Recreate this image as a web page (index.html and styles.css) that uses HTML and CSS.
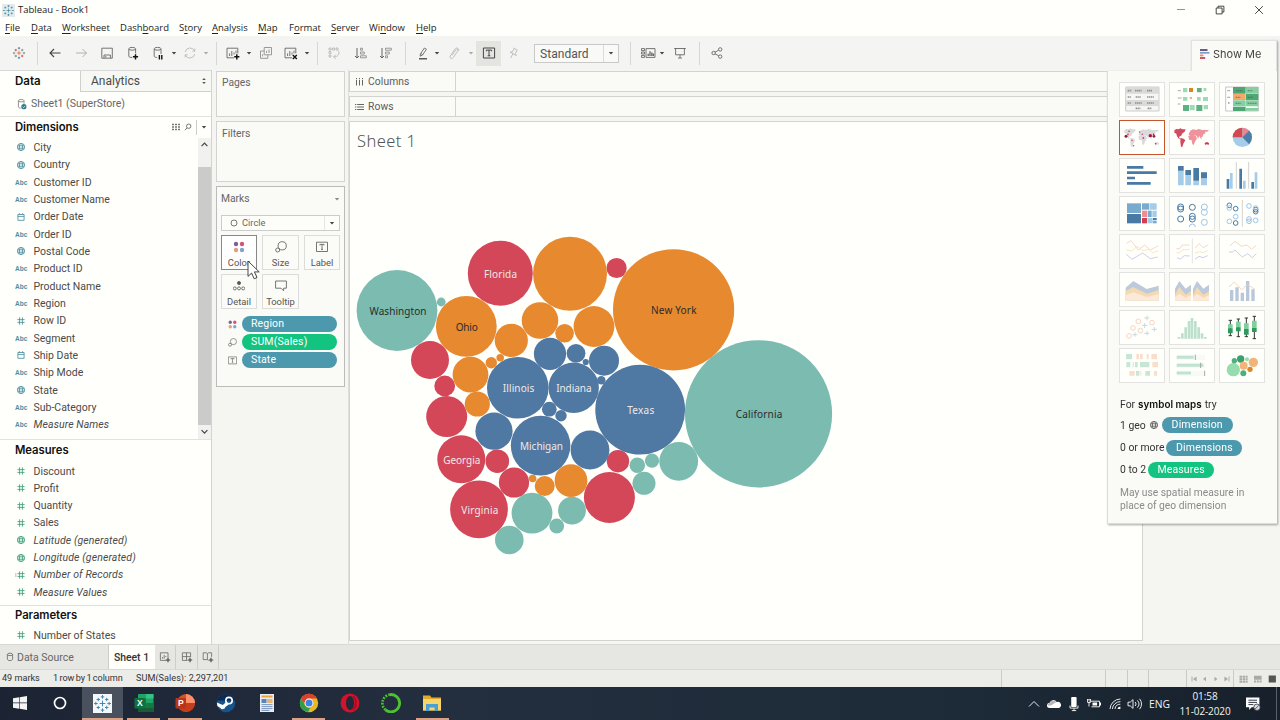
FILE: index.html
```html
<!DOCTYPE html>
<html lang="en">
<head>
<meta charset="utf-8">
<title>Tableau - Book1</title>
<link rel="stylesheet" href="styles.css">
</head>
<body>
<svg class="defs" aria-hidden="true">
  <symbol id="globe" viewBox="0 0 12 12"><circle cx="6" cy="6" r="3.6"/><ellipse cx="6" cy="6" rx="1.6" ry="3.6"/><path d="M2.6 4.8h6.8M2.6 7.2h6.8"/></symbol>
  <symbol id="hash" viewBox="0 0 12 12"><path d="M4.6 2.3v7.4M7.4 2.3v7.4M2.4 4.6h7.2M2.4 7.4h7.2"/></symbol>
  <symbol id="cal" viewBox="0 0 12 12"><path d="M2.9 3.5h6.2v5.8H2.9zM2.9 5.4h6.2M4.4 2.2v1.5M7.6 2.2v1.5"/></symbol>
  <symbol id="caret" viewBox="0 0 6 6"><path d="M.8 2h4.4L3 4.5z"/></symbol>
  <symbol id="dots" viewBox="0 0 12 12"><circle cx="3" cy="3" r="2.2" fill="#7b6291"/><circle cx="9" cy="3" r="2.2" fill="#d5527a"/><circle cx="3" cy="9" r="2.2" fill="#e99a7c"/><circle cx="9" cy="9" r="2.2" fill="#83a3cf"/></symbol>
  <symbol id="size" viewBox="0 0 12 12"><circle cx="7.2" cy="4.8" r="4.1"/><circle cx="2.7" cy="9" r="2"/></symbol>
  <symbol id="tbox" viewBox="0 0 12 12"><path d="M.5 1.2h11v9.3H.5zM3.9 4.4v-1h4.2v1M6 3.4v5M5 8.4h2"/></symbol>
</svg>

<header class="titlebar">
  <svg class="app-icon" viewBox="0 0 13 13"><rect width="13" height="13" fill="#e2eaec"/><path d="M6.5 4.5v4M4.5 6.5h4M6.5 1v2.2M5.4 2.1h2.2M6.5 9.8V12M5.4 10.9h2.2M1 6.5h2.2M9.8 6.5H12M3.3 2.6v2M2.3 3.6h2M9.7 2.6v2M8.7 3.6h2M3.3 8.4v2M2.3 9.4h2M9.7 8.4v2M8.7 9.4h2" stroke="#4e91a8" stroke-width=".8"/></svg>
  <span class="title">Tableau - Book1</span>
  <div class="winbtns">
    <svg viewBox="0 0 10 10"><path d="M1 4.5h8" stroke="#888"/></svg>
    <svg viewBox="0 0 10 10"><path d="M1.2 3h5.9v5.9H1.2zM3 3V1.2h5.9V7H7.1"/></svg>
    <svg viewBox="0 0 10 10"><path d="M1.2 1.2l7.6 7.6M8.8 1.2L1.2 8.8"/></svg>
  </div>
</header>

<nav class="menu">
  <span><u>F</u>ile</span><span><u>D</u>ata</span><span><u>W</u>orksheet</span><span>Dash<u>b</u>oard</span><span>S<u>t</u>ory</span><span><u>A</u>nalysis</span><span><u>M</u>ap</span><span>F<u>o</u>rmat</span><span><u>S</u>erver</span><span>Wi<u>n</u>dow</span><span><u>H</u>elp</span>
</nav>

<div class="toolbar">
  <i class="w37"><svg viewBox="0 0 16 16"><path d="M8 5.8v4.4M5.8 8h4.4" stroke="#e0783c"/><path d="M8 2v2.4M6.9 3.2h2.2M8 11.6V14M6.9 12.8h2.2" stroke="#5f7f9f"/><path d="M3 7v2.2M2 8h2.2M13 7v2.2M11.9 8H14" stroke="#7a8aa8"/><path d="M4.8 3.9v2.4M3.6 5.1H6" stroke="#c9554f"/><path d="M11.2 3.9v2.4M10 5.1h2.4" stroke="#5b9aa6"/><path d="M4.8 9.8v2.4M3.6 11H6" stroke="#5b9aa6"/><path d="M11.2 9.8v2.4M10 11h2.4" stroke="#c9554f"/></svg></i>
  <b class="sep sep-r4"></b>
  <i class="w26"><svg viewBox="0 0 16 16"><path d="M13.5 8H3M7 4L3 8l4 4" stroke="#444" stroke-width="1.1"/></svg></i>
  <i class="w26"><svg viewBox="0 0 16 16"><path d="M3 8h10.5M9.5 4l4 4-4 4" stroke="#aaa"/></svg></i>
  <i class="w26"><svg viewBox="0 0 16 16"><path d="M2.8 3.2h10.5v10H2.8zM5 13v-3h6.4v3M6.8 11v1.6"/></svg></i>
  <i class="w26"><svg viewBox="0 0 16 16"><path d="M3.8 4v7.2c0 .9 1.7 1.3 3.4 1.3M10.6 4v4.4"/><ellipse cx="7.2" cy="3.8" rx="3.4" ry="1.4"/><path d="M10.5 9.2v5.2M7.9 11.8h5.2" stroke="#111" stroke-width="1.5"/></svg></i>
  <i class="w24"><svg viewBox="0 0 16 16"><path d="M4.2 4v7.2c0 .9 1.7 1.3 3 1.3M11 4v5"/><ellipse cx="7.6" cy="3.8" rx="3.4" ry="1.4"/><path d="M9.4 10v4.4M11.8 10v4.4" stroke="#111" stroke-width="1.4"/></svg></i>
  <i class="w8"><svg class="caret"><use href="#caret"/></svg></i>
  <i class="w24"><svg viewBox="0 0 16 16" class="dim"><path d="M3.2 7a5 5 0 0 1 9.4-1.2M12.8 9a5 5 0 0 1-9.4 1.2M12.8 3.6v2.6h-2.4M3.2 12.4V9.8h2.4"/></svg></i>
  <i class="w8"><svg class="caret light"><use href="#caret"/></svg></i>
  <b class="sep sep-l6 sep-r4"></b>
  <i class="w24"><svg viewBox="0 0 16 16"><path d="M9 12.8H2V3.2h10.8v5.2M4.6 11V8.4M6.8 11V6M9 9.6V7.4M11 8.4V5.6"/><path d="M11.8 9.2v5.2M9.2 11.8h5.2" stroke="#111" stroke-width="1.5"/></svg></i>
  <i class="w8"><svg class="caret"><use href="#caret"/></svg></i>
  <i class="w26"><svg viewBox="0 0 16 16" class="mid"><path d="M6.2 2.5h7.3v7.3H6.2zM6.2 6H2.5v7.3h7.3V9.8M8.6 8V5.8M11 8V4.4M4.6 11.4V9.2"/></svg></i>
  <i class="w24"><svg viewBox="0 0 16 16"><path d="M9 12.8H2V3.2h10.8v5.2M4.6 11V8.4M6.8 11V6M9 9.6V7.4M11 8.4V5.6"/><path d="M9.8 10l4 4M13.8 10l-4 4" stroke="#111" stroke-width="1.4"/></svg></i>
  <i class="w8"><svg class="caret"><use href="#caret"/></svg></i>
  <b class="sep sep-l6 sep-r3"></b>
  <i class="w26"><svg viewBox="0 0 16 16" class="dim"><path d="M3 3h2v2H3zM6.5 3h2v2h-2zM10 3h2v2h-2zM3 6.5h2v2H3zM3 10h2v2H3zM12.5 5.8c1.6 3.2-.6 6-4.8 6M9.8 9.6l-2.2 2.2 2.2 2.2"/></svg></i>
  <i class="w28"><svg viewBox="0 0 16 16" class="mid"><path d="M4 3v10M2 11l2 2 2-2" stroke="#555"/><path d="M7.5 3.2h2v2h-2zM7.5 7h3.8v2H7.5zM7.5 10.8h5.8v2H7.5z"/></svg></i>
  <i class="w22"><svg viewBox="0 0 16 16" class="mid"><path d="M4 3v10M2 11l2 2 2-2" stroke="#555"/><path d="M7.5 3.2h5.8v2H7.5zM7.5 7h3.8v2H7.5zM7.5 10.8h2v2h-2z"/></svg></i>
  <b class="sep sep-l8 sep-r7"></b>
  <i class="w20"><svg viewBox="0 0 16 16"><path d="M4 13.8h8" stroke="#333" stroke-width="1.2"/><path d="M5 11.2l.6-2.6L9.4 3l2 1.2-3.8 5.8zM5.8 8.4l1.9 1.3"/></svg></i>
  <i class="w8"><svg class="caret"><use href="#caret"/></svg></i>
  <i class="w26"><svg viewBox="0 0 16 16" class="dim"><path d="M6.2 10.2l3.6-5.4c1-1.4 2.8-.3 2 1.1l-4.6 6.7c-1.4 2-4.2.4-2.9-1.6l4.9-7.2c1.4-1.8 4.4-.2 3.4 2"/></svg></i>
  <i class="w8"><svg class="caret light"><use href="#caret"/></svg></i>
  <i class="w25 pressed"><svg viewBox="0 0 16 16"><path d="M2.4 3h11.2v10H2.4z" stroke="#333"/><path d="M5.4 6.2V5.1h5.2v1.1M8 5.1v5.6M6.7 10.8h2.6" stroke="#333"/></svg></i>
  <i class="w24"><svg viewBox="0 0 16 16" class="dim"><path d="M8.6 3l3.8 2.2M9.2 3.4L7.4 7M12 5.2l-1.6 3.4M5 7l6.4 3.6M5 7l2.4 0M11.4 10.6l-1-2M7.8 9l-2.2 4"/></svg></i>
  <div class="fit"><span>Standard</span><em><svg class="caret big"><use href="#caret"/></svg></em></div>
  <b class="sep sep-l11 sep-r7"></b>
  <i class="w20"><svg viewBox="0 0 16 16"><path d="M1.5 3.6h3v2h-3zM1.5 7h3v2h-3zM1.5 10.4h3v2h-3zM6 3.6h9v8.8H6z"/><path d="M8.2 11V8.8M10 11V6.2M11.8 11V7.4M13.4 11V8.6" stroke-width="1.3"/></svg></i>
  <i class="w8"><svg class="caret"><use href="#caret"/></svg></i>
  <i class="w28"><svg viewBox="0 0 16 16"><path d="M2.2 3.5h11.6M3.6 3.5V9.8h8.8V3.5M8 9.8v3M6 13h4"/></svg></i>
  <b class="sep sep-l5 sep-r5"></b>
  <i class="w24"><svg viewBox="0 0 16 16"><circle cx="4.6" cy="8" r="1.7"/><circle cx="11.2" cy="4.4" r="1.7"/><circle cx="11.2" cy="11.6" r="1.7"/><path d="M6 7.2l3.7-2M6 8.8l3.7 2"/></svg></i>
</div>

<main class="workspace">
  <aside class="data-pane">
    <div class="pane-tabs"><span class="on">Data</span><span class="off">Analytics<svg viewBox="0 0 6 8"><path d="M1.2 3L3 1l1.8 2zM1.2 5L3 7l1.8-2z"/></svg></span></div>
    <div class="source"><svg viewBox="0 0 12 12"><path d="M2.4 2.8v6c0 .7 1 1.2 2.4 1.3M8 2.8v3"/><ellipse cx="5.2" cy="2.7" rx="2.8" ry="1.2"/><circle cx="7.9" cy="8.7" r="2.6" fill="#2c7f8f" stroke="none"/><path d="M6.7 8.7l.9.9 1.5-1.7" stroke="#fff" stroke-width=".7"/></svg><span>Sheet1 (SuperStore)</span></div>
    <section class="dims">
      <div class="head"><h2>Dimensions</h2><svg class="grid-ic" viewBox="0 0 10 8"><path d="M1 1.5h2M4 1.5h2M7 1.5h2M1 4h2M4 4h2M7 4h2M1 6.5h2M4 6.5h2M7 6.5h2"/></svg><svg class="find-ic" viewBox="0 0 8 8"><circle cx="4.7" cy="3.2" r="2.2"/><path d="M3 4.9L1 7.2"/></svg><em><svg class="caret big"><use href="#caret"/></svg></em></div>
      <div class="scroller">
        <ul class="fields dim-list">
          <li><svg><use href="#globe"/></svg>City</li>
          <li><svg><use href="#globe"/></svg>Country</li>
          <li><abbr>Abc</abbr>Customer ID</li>
          <li><abbr>Abc</abbr>Customer Name</li>
          <li><svg><use href="#cal"/></svg>Order Date</li>
          <li><abbr>Abc</abbr>Order ID</li>
          <li><svg><use href="#globe"/></svg>Postal Code</li>
          <li><abbr>Abc</abbr>Product ID</li>
          <li><abbr>Abc</abbr>Product Name</li>
          <li><abbr>Abc</abbr>Region</li>
          <li><svg><use href="#hash"/></svg>Row ID</li>
          <li><abbr>Abc</abbr>Segment</li>
          <li><svg><use href="#cal"/></svg>Ship Date</li>
          <li><abbr>Abc</abbr>Ship Mode</li>
          <li><svg><use href="#globe"/></svg>State</li>
          <li><abbr>Abc</abbr>Sub-Category</li>
          <li class="gen"><abbr>Abc</abbr>Measure Names</li>
        </ul>
        <div class="scrollbar"><svg viewBox="0 0 13 29"><path d="M3.6 8.2l2.9-3 2.9 3"/></svg><div class="thumb"></div><svg class="down" viewBox="0 0 13 14"><path d="M3.6 5.2l2.9 3 2.9-3"/></svg></div>
      </div>
    </section>
    <section class="meas">
      <h2>Measures</h2>
      <ul class="fields green">
        <li><svg><use href="#hash"/></svg>Discount</li>
        <li><svg><use href="#hash"/></svg>Profit</li>
        <li><svg><use href="#hash"/></svg>Quantity</li>
        <li><svg><use href="#hash"/></svg>Sales</li>
        <li class="gen"><svg><use href="#globe"/></svg>Latitude (generated)</li>
        <li class="gen"><svg><use href="#globe"/></svg>Longitude (generated)</li>
        <li class="gen"><svg viewBox="0 0 12 12"><path d="M4.6 2.3v7.4M7.4 2.3v7.4M2.4 4.6h7.2M2.4 7.4h7.2M.2 5h1.2M.2 7h1.2"/></svg>Number of Records</li>
        <li class="gen"><svg><use href="#hash"/></svg>Measure Values</li>
      </ul>
    </section>
    <section class="params">
      <h2>Parameters</h2>
      <ul class="fields green"><li><svg><use href="#hash"/></svg>Number of States</li></ul>
    </section>
  </aside>

  <div class="cards">
    <div class="card pages">Pages</div>
    <div class="card filters">Filters</div>
    <div class="card marks">
      <div class="marks-head"><span>Marks</span><svg class="caret mid-caret"><use href="#caret"/></svg></div>
      <div class="mark-type"><svg viewBox="0 0 8 8"><circle cx="4" cy="4" r="3"/></svg><span>Circle</span><em><svg class="caret big"><use href="#caret"/></svg></em></div>
      <div class="mark-btns">
        <div class="mb active"><svg><use href="#dots"/></svg>Color</div>
        <div class="mb"><svg><use href="#size"/></svg>Size</div>
        <div class="mb"><svg><use href="#tbox"/></svg>Label</div>
        <div class="mb"><svg viewBox="0 0 12 12"><circle cx="6" cy="3" r="1.6" fill="#555"/><circle cx="1.8" cy="8.4" r="1.5"/><circle cx="6" cy="8.4" r="1.5"/><circle cx="10.2" cy="8.4" r="1.5"/></svg>Detail</div>
        <div class="mb"><svg viewBox="0 0 12 12"><path d="M.6 1h10.8v7.2H8.6v2.6L6 8.2H.6z"/></svg>Tooltip</div>
      </div>
      <div class="pills">
        <svg><use href="#dots"/></svg><span class="pill">Region</span>
        <svg><use href="#size"/></svg><span class="pill grn">SUM(Sales)</span>
        <svg><use href="#tbox"/></svg><span class="pill">State</span>
      </div>
      <svg class="cursor" viewBox="0 0 13 20"><path d="M1 1v15.4l3.6-3.4 2.6 5.8 2.8-1.3-2.6-5.6h4.8z" fill="#fff" stroke="#333" stroke-width=".9"/></svg>
    </div>
  </div>

  <div class="sheet-area">
    <div class="shelf"><span><svg viewBox="0 0 9 8"><path d="M1.5 0v1.2M4.5 0v1.2M7.5 0v1.2M1.5 2v5.5M4.5 2v5.5M7.5 2v5.5"/></svg>Columns</span></div>
    <div class="shelf rows"><span><svg viewBox="0 0 9 8"><path d="M0 1.5h1.3M0 4h1.3M0 6.5h1.3M2.2 1.5H9M2.2 4H9M2.2 6.5H9"/></svg>Rows</span></div>
    <div class="sheet">
      <svg class="viz" viewBox="350 122 792 518">
        <text class="sheet-title" x="357" y="147" textLength="59">Sheet 1</text>
        <g fill="#7bbbb0">
          <circle cx="397" cy="310.5" r="40.4"/><circle cx="441.2" cy="302" r="4.4"/><circle cx="758.5" cy="413.8" r="73.6"/><circle cx="532" cy="513.2" r="20.4"/><circle cx="509.3" cy="540" r="14.3"/><circle cx="556.7" cy="526" r="7.4"/><circle cx="572" cy="510.6" r="13.9"/><circle cx="637.3" cy="465.2" r="7.8"/><circle cx="652" cy="460.7" r="7.1"/><circle cx="678.7" cy="461.3" r="19.4"/><circle cx="644" cy="483.3" r="11.5"/>
        </g>
        <g fill="#d34759">
          <circle cx="500.3" cy="273.2" r="32.5"/><circle cx="616.6" cy="268" r="10.1"/><circle cx="430" cy="360" r="19"/><circle cx="444.7" cy="386" r="10.4"/><circle cx="446.7" cy="416.5" r="20.5"/><circle cx="461.3" cy="459.3" r="24"/><circle cx="497.3" cy="461.2" r="11.8"/><circle cx="514" cy="482.5" r="15.1"/><circle cx="618" cy="461.2" r="11.2"/><circle cx="609.4" cy="497.5" r="25.5"/><circle cx="479" cy="509.3" r="28.9"/>
        </g>
        <g fill="#e7892f">
          <circle cx="570" cy="273.8" r="37"/><circle cx="673.6" cy="309.8" r="60.6"/><circle cx="466.3" cy="326.3" r="30.4"/><circle cx="511.3" cy="340.4" r="16.6"/><circle cx="540" cy="320.5" r="18.3"/><circle cx="564.6" cy="333.3" r="9.3"/><circle cx="594" cy="326.5" r="20.4"/><circle cx="470.5" cy="374.6" r="17.9"/><circle cx="491.3" cy="362.8" r="5.7"/><circle cx="500.2" cy="357.7" r="3.8"/><circle cx="477.3" cy="404" r="12.6"/><circle cx="532.6" cy="478.5" r="3.8"/><circle cx="544.7" cy="486" r="10"/><circle cx="571" cy="480.7" r="16.4"/>
        </g>
        <g fill="#4f78a2">
          <circle cx="640.2" cy="409.7" r="44.9"/><circle cx="517.8" cy="387.7" r="30.8"/><circle cx="573.7" cy="387.7" r="25.2"/><circle cx="550" cy="353.9" r="16.1"/><circle cx="576" cy="353.3" r="9.4"/><circle cx="585.8" cy="362" r="3.1"/><circle cx="604" cy="360.7" r="15"/><circle cx="601.3" cy="380.2" r="4.2"/><circle cx="494" cy="431.2" r="18.6"/><circle cx="549.3" cy="409.2" r="7.4"/><circle cx="561" cy="415.7" r="5.7"/><circle cx="540.6" cy="445.6" r="29.8"/><circle cx="590" cy="450" r="19.4"/>
        </g>
        <g class="lbl-dark"><text x="369.5" y="315" textLength="57">Washington</text><text x="455.7" y="330.5" textLength="22">Ohio</text><text x="651" y="314.2" textLength="45.5">New York</text><text x="735.8" y="418.2" textLength="46.5">California</text></g>
        <g class="lbl-light"><text x="484" y="277.7" textLength="33">Florida</text><text x="502.8" y="392.3" textLength="31.5">Illinois</text><text x="556.2" y="392.3" textLength="35.3">Indiana</text><text x="627.2" y="414.3" textLength="27">Texas</text><text x="520" y="450" textLength="43">Michigan</text><text x="443.3" y="464" textLength="37">Georgia</text><text x="461.3" y="514" textLength="37">Virginia</text></g>
      </svg>
    </div>
  </div>
</main>

<footer class="sheet-tabs">
  <span class="ds"><svg viewBox="0 0 8 10"><ellipse cx="4" cy="2.4" rx="2.6" ry="1.2"/><path d="M1.4 2.4v5c0 1.6 5.2 1.6 5.2 0v-5"/></svg>Data Source</span>
  <span class="cur">Sheet 1</span>
  <span class="new"><svg viewBox="0 0 12 12"><path d="M7.5 9.4H1.4V1.8H9v5M3.6 7.6V6M5.2 7.6V4M6.8 6V5"/><path d="M9 6.8v4.4M6.8 9H11.2" class="plus"/></svg></span>
  <span class="new"><svg viewBox="0 0 12 12"><path d="M6.5 9.4H1.4V1.8H9.6v4M5.5 1.8v7.6M1.4 5.6h8.2"/><path d="M9 6.8v4.4M6.8 9H11.2" class="plus"/></svg></span>
  <span class="new"><svg viewBox="0 0 12 12"><path d="M6.5 9.4L5.4 8.6H1.2V1.8h3.2l1 .8 1-.8h3.2v4M5.4 2.6v6"/><path d="M9 6.8v4.4M6.8 9H11.2" class="plus"/></svg></span>
</footer>

<div class="status">
  <span class="s1">49 marks</span><span class="s2">1 row by 1 column</span><span class="s3">SUM(Sales): 2,297,201</span>
  <div class="cells"><b class="c104"></b><b class="c22"></b><b class="c21"></b><b class="c38"></b>
    <b class="c47"><svg viewBox="0 0 46 8"><path d="M6 4l3.6-2.4v4.8zM16 4l3-2.2v4.4zM30.4 4l-3-2.2v4.4zM41 4l-3.6-2.4v4.8z"/><path d="M5 1.5v5M42 1.5v5" class="ln"/></svg></b>
    <b class="c47"><svg viewBox="0 0 46 8"><path d="M5.5.7H8v2H5.5zM8.6.7H11v2H8.6zM11.6.7h2v2h-2zM5.5 3.2H8v2H5.5zM8.6 3.2H11v2H8.6zM11.6 3.2h2v2h-2zM5.5 5.7H8v2H5.5zM8.6 5.7H11v2H8.6zM11.6 5.7h2v2h-2zM20 .7h7.6v4H20zM20 5.5h2v2h-2zM22.8 5.5h2v2h-2zM25.6 5.5h2v2h-2z"/><path d="M34.7.5h7.2v7h-7.2z" class="dk"/></svg></b>
  </div>
</div>

<div class="taskbar">
  <i class="tb40"><svg viewBox="0 0 16 16"><path d="M1 3.2L7.2 2.3v5.3H1zM7.8 2.2L15 1.1v6.5H7.8zM1 8.3h6.2v5.4L1 12.8zM7.8 8.3H15v6.6l-7.2-1.1z" fill="#f4f4f4"/></svg></i>
  <i class="tb42"><svg viewBox="0 0 16 16"><circle cx="8" cy="8" r="5.5" fill="none" stroke="#fff" stroke-width="1.7"/></svg></i>
  <i class="open sel"><svg class="i19" viewBox="0 0 18 18"><rect width="18" height="18" fill="#f5f8fa"/><path d="M9 6.3v5.4M6.3 9h5.4M9 1v3.4M7.4 2.7h3.2M9 13.6V17M7.4 15.3h3.2M1 9h3.4M2.7 7.4v3.2M13.6 9H17M15.3 7.4v3.2M5 3.6v3.2M3.4 5.2h3.2M13 3.6v3.2M11.4 5.2h3.2M5 11.2v3.2M3.4 12.8h3.2M13 11.2v3.2M11.4 12.8h3.2" stroke="#3f82a8" stroke-width=".9"/></svg></i>
  <i class="open"><svg class="i20" viewBox="0 0 20 20"><rect x="4" y="1" width="15.5" height="18" rx="1" fill="#21a366"/><path d="M12 1h7.5v4.5H12z" fill="#33c481"/><path d="M4 5.5h8V10H4z" fill="#107c41"/><path d="M4 10h15.5v4.5H4z" fill="#107c41"/><path d="M4 14.5h15.5V19H4z" fill="#185c37"/><rect x=".5" y="5" width="10.5" height="10.5" rx="1" fill="#0f7040"/><text x="2.9" y="13.2">X</text></svg></i>
  <i class="open"><svg class="i20" viewBox="0 0 20 20"><circle cx="11" cy="10" r="9" fill="#d35230"/><path d="M11 1a9 9 0 0 1 9 9h-9z" fill="#ff8f6b"/><path d="M2 10h18a9 9 0 0 1-18 0z" fill="#c43e1c"/><rect x=".5" y="5" width="10.5" height="10.5" rx="1" fill="#b7361a"/><text x="3" y="13.2">P</text></svg></i>
  <i><svg class="i20" viewBox="0 0 20 20"><circle cx="10" cy="10" r="9.2" fill="#15558c"/><path d="M1.2 7.5a9.2 9.2 0 0 1 17.6 0z" fill="#10294f"/><circle cx="13" cy="7.6" r="3.2" fill="none" stroke="#fff" stroke-width="1.6"/><path d="M.8 9.4l6 2.6 3.4-3 2.6 2.6-3.4 2.4a2.8 2.8 0 0 1-5 1L1.4 13z" fill="#fff"/></svg></i>
  <i><svg class="i20" viewBox="0 0 20 20"><path d="M3 1h14v18H3z" fill="#e9edf2"/><path d="M4.5 2.5h11v2h-11z" fill="#e8a33c"/><path d="M4.5 6h5v4h-5z" fill="#5a83b9"/><path d="M10 6h5.5v4H10z" fill="#e8b56c"/><path d="M4.5 11.6h11M4.5 13.6h11M4.5 15.6h11M4.5 17.4h8" stroke="#7c97c0" stroke-width="1"/></svg></i>
  <i class="open"><svg class="i20" viewBox="0 0 20 20"><circle cx="10" cy="10" r="9.2" fill="#e8b922"/><path d="M2 5.4A9.2 9.2 0 0 1 18 5.6H10a4.4 4.4 0 0 0-4 6.2z" fill="#d8412f"/><path d="M2 5.4l4.2 7a4.4 4.4 0 0 0 5.2 2L9 19.1A9.2 9.2 0 0 1 2 5.4z" fill="#2e9e4c"/><circle cx="10" cy="10" r="4.4" fill="#fff"/><circle cx="10" cy="10" r="3.5" fill="#4081e8"/></svg></i>
  <i><svg class="i20" viewBox="0 0 20 20"><ellipse cx="10" cy="10" rx="9.4" ry="9.4" fill="#d3122b"/><ellipse cx="10" cy="10" rx="4" ry="7" fill="#1f2a3a"/><path d="M12.5 3.5c4.5 2 4.5 11 0 13" fill="none" stroke="#a70e22" stroke-width="2"/></svg></i>
  <i><svg class="i20" viewBox="0 0 20 20"><path d="M8 1.8a8.6 8.6 0 1 1-3.5 15" fill="none" stroke="#4cc233" stroke-width="2.8"/><path d="M4.5 16.8A8.6 8.6 0 0 1 8 1.8" fill="none" stroke="#4cc233" stroke-width="2.6" stroke-dasharray="1.8 1.2"/></svg></i>
  <i class="open"><svg class="i20" viewBox="0 0 20 20"><path d="M1 2.5h7l1.5 2H19v13H1z" fill="#e3a92c"/><path d="M1 6h18v11.5H1z" fill="#f7d56c"/><path d="M4 18v-7h12v7h-3.4v-3.6H7.4V18z" fill="#4a9fd4"/></svg></i>
  <div class="tray">
    <svg viewBox="0 0 16 16"><path d="M3 10.5l5-5 5 5" class="wl"/></svg>
    <svg viewBox="0 0 16 16"><path d="M3.5 12a2.6 2.6 0 0 1 .2-5.2A3.8 3.8 0 0 1 10.6 6a3 3 0 0 1 2.3 6z" fill="#fff"/><path d="M1.8 9.6a2.6 2.6 0 0 1 2-2.8A3.8 3.8 0 0 1 10.4 6L5 9.6z" fill="#b6b6bd"/></svg>
    <svg viewBox="0 0 16 16"><rect x="5.2" y="1" width="5.4" height="10" rx=".8" fill="#fff"/><path d="M4 9.5v2.6h8V9.5M8 12v2.6M5.8 14.6h4.4" class="wl"/></svg>
    <svg viewBox="0 0 16 16"><path d="M3.5 5.2h10v5.6h-8" class="wl"/><path d="M6.5 6.4h4.6v3.2H6.5zM13.8 6.6H15v2.8h-1.2z" fill="#fff"/><path d="M1 3.8h4M1.6 3v3.5h2.8V3M3 6.5v4" class="wl"/></svg>
    <svg viewBox="0 0 16 16"><path d="M3 13A10.5 10.5 0 0 1 13.4 3M5.4 13a8 8 0 0 1 8-7.4M8 13a5.4 5.4 0 0 1 5.4-4.8" class="wl"/><path d="M10.4 13a3 3 0 0 1 3-2.6V13z" fill="#fff"/></svg>
    <svg viewBox="0 0 16 16"><path d="M1 6.2h2.2L6 3.6v8.8L3.2 9.8H1zM8.2 6a3 3 0 0 1 0 4M10.4 4.4a5.4 5.4 0 0 1 0 7.2M12.6 2.8a8 8 0 0 1 0 10.4" class="wl"/></svg>
    <span class="lang">ENG</span>
    <div class="clock"><span>01:58</span><span>11-02-2020</span></div>
    <svg class="note" viewBox="0 0 16 16"><path d="M1 1.5h13.4v9.8H6.6L4.2 14v-2.7H1z" fill="#fff"/><path d="M3.4 4.2H12M3.4 6.4H12M3.4 8.6h5" stroke="#1b2430" stroke-width=".9"/><circle cx="12" cy="11.2" r="3.2" fill="#ddd" stroke="#1b2430" stroke-width=".7"/><path d="M10 13.2l4-4" stroke="#1b2430" stroke-width=".7"/></svg>
  </div>
</div>

<aside class="showme">
  <div class="sm-tab"><svg viewBox="0 0 10 10"><path d="M0 1h7.5" stroke="#5b4a78"/><path d="M0 3.8h9.5" stroke="#7f9fd0"/><path d="M0 6.4h3.4" stroke="#e8906a"/><path d="M0 9h5.2" stroke="#cf3f5f"/></svg>Show Me</div>
  <div class="sm-body">
    <div class="thumbs">
      <svg viewBox="0 0 138 105"><path d="M20 15h100v72H20z" fill="#f6f6f4" stroke="#ccc" stroke-width="3"/><path d="M20 15h100v20H20zM20 54h100v18H20z" fill="#dadad8"/><path d="M26 26h12M48 26h20M84 26h16M26 45h10M50 45h16M84 45h22M26 63h10M48 63h22M84 63h22M50 79h14M86 79h12" stroke="#8f8f8f" stroke-width="5" stroke-dasharray="4 1.5"/></svg>
      <svg viewBox="0 0 138 105"><path d="M26 26h10M26 48h12M26 66h8" stroke="#aaa" stroke-width="3"/><path d="M84 18h14v13H84zM42 69h18v18H42zM82 69h18v18H82z" fill="#5fb184"/><path d="M42 18h13v13H42zM104 18h8v9h-8zM42 45h13v11H42zM84 45h11v11H84zM102 45h15v12h-15zM62 69h15v16H62zM104 69h13v13h-13z" fill="#9edab4"/><path d="M60 18h12v12H60z" fill="#d98526"/><path d="M62 45h7v6h-7z" fill="#f2b27a"/></svg>
      <svg viewBox="0 0 138 105"><path d="M20 15h98v72H20z" fill="#fff" stroke="#aaa" stroke-width="2"/><path d="M42 15h38v20H42zM80 36h38v18H80zM42 74h38v13H42z" fill="#4fa574"/><path d="M81 15h37v20H81zM42 55h38v18H42zM81 55h37v18H81zM81 78h37v8H81z" fill="#84cf9f"/><path d="M42 36h37v18H42z" fill="#f3a968"/><path d="M25 26h8M25 46h8M27 63h6M52 26h18M86 26h14M50 46h14M86 46h16M50 64h16M86 64h28" stroke="#46604f" stroke-opacity=".6" stroke-width="4" stroke-dasharray="4 1.5"/></svg>

      <svg class="picked" viewBox="0 0 138 105"><path d="M16 31l6-4 8 1 3-3 8 3 9 0-3 7-8 6-2 6-5 2-2 5 4 3-4 0-6-8-2-8-6-3zM34 54l10 2 5 5-6 10-3 10-4-1-2-14zM58 48l8-3 14 2 4 8-6 10-4 10-4-2-2-12-8-2zM60 40l4-8 8-4 10 2 6-3 12 3 20 0-6 6-4-2-1 6-6 3-2 7-4 1 1 8-4-5-3-6-4 8-3-7-5-3-6 1-8-1-6-1zM107 69l7-3 6 3-1 6-5-2-6 1z" fill="#dadadc"/><g fill="#a31545"><circle cx="21" cy="49" r="4.5"/><circle cx="94" cy="47" r="5"/><circle cx="105" cy="49" r="4"/><circle cx="104" cy="43" r="2.5"/><circle cx="73" cy="54" r="2.5"/></g><g fill="#d0406e"><circle cx="30" cy="34" r="2.5"/><circle cx="27" cy="43" r="2.5"/><circle cx="39" cy="61" r="2.2"/><circle cx="44" cy="77" r="2.2"/><circle cx="62" cy="36" r="2.5"/><circle cx="70" cy="43" r="2.2"/><circle cx="110" cy="71" r="2.5"/></g></svg>
      <svg viewBox="0 0 138 105"><path d="M16 31l6-4 8 1 3-3 8 3 9 0-3 7-8 6-2 6-5 2-2 5 4 3-4 0-6-8-2-8-6-3zM34 54l10 2 5 5-6 10-3 10-4-1-2-14z" fill="#d24b5e"/><path d="M58 48l8-3 14 2 4 8-6 10-4 10-4-2-2-12-8-2zM60 40l4-8 8-4 10 2 6-3 12 3 20 0-6 6-4-2-1 6-6 3-2 7-4 1 1 8-4-5-3-6-4 8-3-7-5-3-6 1-8-1-6-1z" fill="#f0929b"/><path d="M107 69l7-3 6 3-1 6-5-2-6 1z" fill="#c63a54"/></svg>
      <svg viewBox="0 0 138 105"><circle cx="70" cy="52" r="29" fill="#a5cdea"/><path d="M70 52V23a29 29 0 0 0-29 29z" fill="#d4494f"/><path d="M70 52V23a29 29 0 0 1 20.5 8.5z" fill="#ee8490"/><path d="M70 52l20.5-20.5a29 29 0 0 1 0 41z" fill="#4c7fa8"/></svg>

      <svg viewBox="0 0 138 105"><path d="M24 28h49M24 44h89M24 60h24M24 76h71" stroke="#487aa3" stroke-width="8"/></svg>
      <svg viewBox="0 0 138 105"><path d="M27 38h17v44H27zM49 51h17v31H49zM73 68h17v14H73zM96 61h18v21H96z" fill="#a5cdea"/><path d="M27 24h17v14H27zM49 36h17v15H49zM73 30h17v38H73zM96 43h18v18H96z" fill="#487aa3"/></svg>
      <svg viewBox="0 0 138 105"><path d="M52 12v80M89 12v80" stroke="#bbb" stroke-width="2"/><path d="M27 92V63M65 92V32M101 92V72" stroke="#487aa3" stroke-width="8"/><path d="M37 92V45M76 92V68M111 92V43" stroke="#a5cdea" stroke-width="8"/></svg>

      <svg viewBox="0 0 138 105"><path d="M24 22h42v29H24z" fill="#7baacf"/><path d="M24 54h42v28H24z" fill="#487aa3"/><path d="M69 22h22v19H69z" fill="#7baacf"/><path d="M93 22h20v19H93zM100 44h13v19h-13zM86 66h15v16H86z" fill="#a5cdea"/><path d="M69 44h15v19H69z" fill="#ee8e92"/><path d="M69 66h15v16H69z" fill="#cf3f4e"/><path d="M86 44h12v19H86z" fill="#7baacf"/><path d="M102 66h11v6h-11z" fill="#487aa3"/><path d="M102 74h11v8h-11z" fill="#7baacf"/></svg>
      <svg viewBox="0 0 138 105" class="rings"><g stroke="#487aa3"><circle cx="35" cy="33" r="9"/><circle cx="35" cy="39" r="9"/><circle cx="35" cy="69" r="9"/><circle cx="70" cy="34" r="9"/><circle cx="70" cy="61" r="9"/><circle cx="70" cy="69" r="9"/></g><g stroke="#9cc6e6"><circle cx="106" cy="33" r="9"/><circle cx="106" cy="49" r="9"/><circle cx="106" cy="79" r="9"/><path d="M61 93a9 9 0 0 1 18 0"/></g></svg>
      <svg viewBox="0 0 138 105" class="rings"><path d="M70 12v80" stroke="#bbb" stroke-width="2"/><g stroke="#487aa3"><circle cx="31" cy="28" r="7"/><circle cx="50" cy="38" r="7"/><circle cx="50" cy="81" r="7"/><circle cx="110" cy="41" r="7"/><circle cx="110" cy="47" r="7"/></g><g stroke="#9cc6e6"><circle cx="31" cy="36" r="7"/><circle cx="50" cy="62" r="7"/><circle cx="31" cy="76" r="7"/><circle cx="90" cy="30" r="7"/><circle cx="110" cy="36" r="7"/><circle cx="90" cy="69" r="7"/><circle cx="90" cy="76" r="7"/><circle cx="110" cy="73" r="7"/></g></svg>

      <svg viewBox="0 0 138 105" class="lines"><path d="M22 28l14-8 22 28 19-15 17 15 24-13" stroke="#f3cfc0"/><path d="M22 47l16 4 16-14 18 13 18-4 10 10 18-5" stroke="#f8e0bd"/><path d="M22 61l17 15 32-19 23 17 22-5" stroke="#bfc7e2"/></svg>
      <svg viewBox="0 0 138 105" class="lines"><path d="M70 14v74" stroke="#ddd"/><path d="M22 44h10l8-11h22" stroke="#f3cfc0"/><path d="M22 56h10l10-10 8 2 12-3M78 57l14-4 10 3 14-6" stroke="#f8e0bd"/><path d="M78 43l12-14 12 12 16-9" stroke="#f3cfc0"/><path d="M24 71l10 4 12-10 16 1M78 76l12-9 12 4 14-6" stroke="#bfc7e2"/></svg>
      <svg viewBox="0 0 138 105" class="lines"><path d="M22 18v70M118 18v70" stroke="#eee" stroke-width="2" stroke-dasharray="2 10"/><path d="M32 36l16-14 20 15 16-4 14 13 12-12" stroke="#f3cfc0"/><path d="M30 54h10l8-6 22 21 16-10 14 12 12-12" stroke="#bfc7e2"/></svg>

      <svg viewBox="0 0 138 105"><path d="M20 47l23-20 40 24 36-10v45H20z" fill="#bccadb"/><path d="M20 58l22-13 42 20 35-11v32H20z" fill="#f5d9b0"/><path d="M20 70l24-9 40 14 35-9v20H20z" fill="#fbe9da"/></svg>
      <svg viewBox="0 0 138 105"><path d="M18 50l13-23 19 23 16-12v48H18zM72 50l12-23 19 23 17-12v48H72z" fill="#bccadb"/><path d="M18 68l13-23 19 23 16-10v28H18zM72 68l12-23 19 23 17-10v28H72z" fill="#f5d9b0"/><path d="M18 76l13-11 19 12 16-8v17H18zM72 76l12-11 19 12 17-8v17H72z" fill="#fbe9da"/></svg>
      <svg viewBox="0 0 138 105"><path d="M38 87V54M54 87V46M70 87V62M86 87V27M102 87V52" stroke="#b9c7db" stroke-width="10"/><path d="M30 45l16-15 22 23 18-15 22 14" stroke="#f3cfb0" stroke-width="2.5" fill="none"/></svg>

      <svg viewBox="0 0 138 105"><g fill="none" stroke="#f5d5c0" stroke-width="3"><circle cx="58" cy="34" r="7"/><circle cx="42" cy="54" r="7"/><circle cx="64" cy="62" r="7"/><circle cx="99" cy="38" r="7"/><circle cx="30" cy="78" r="7"/></g><path d="M84 17v14M76 24h15M77 39v15M69 46h16M48 67v13M40 74h15M84 63v13M76 70h15M106 51v14M98 58h16" stroke="#c9d9dc" stroke-width="3"/></svg>
      <svg viewBox="0 0 138 105"><path d="M30 86v-5M40 86V70M50 86V52M60 86V33M69 86V24M79 86V33M89 86V52M99 86V70M109 86v-5" stroke="#bde0cd" stroke-width="8"/></svg>
      <svg viewBox="0 0 138 105"><path d="M34 31v46M58 27v53M82 24v56M106 19v67" stroke="#333" stroke-width="3"/><path d="M29 31h10M29 77h10M53 27h10M53 80h10M77 24h10M77 80h10M101 19h10M101 86h10" stroke="#333" stroke-width="3"/><path d="M27 43h14v12H27zM51 35h14v17H51zM75 40h14v17H75zM99 32h14v22H99z" fill="#7fd09c"/><path d="M27 55h14v15H27zM51 52h14v12H51zM75 57h14v17H75zM99 54h14v12H99z" fill="#2d9a5c"/></svg>

      <svg viewBox="0 0 138 105"><path d="M21 18h18v16H21zM22 42h12v16H22zM41 42h3v16h-3zM48 42h8v16h-8zM63 42h28v16H63zM51 69h10v14H51zM79 69h14v14H79z" fill="#c8e6d6"/><path d="M52 18h8v16h-8zM63 18h8v16h-8zM83 18h6v16h-6zM97 18h17v16H97zM100 42h17v16h-17zM31 69h16v14H31zM64 69h3v14h-3zM105 69h9v14h-9z" fill="#f9dfcb"/></svg>
      <svg viewBox="0 0 138 105"><path d="M23 20h85v16H23zM23 44h85v16H23zM23 68h85v16H23z" fill="#f7faf6"/><path d="M23 28h51M23 52h80M23 75h43" stroke="#bfe3d0" stroke-width="9"/><path d="M79 20v16M95 44v16M107 68v16" stroke="#999" stroke-width="2.5"/></svg>
      <svg viewBox="0 0 138 105"><circle cx="43" cy="65" r="20" fill="#97dcae"/><circle cx="46" cy="38" r="8" fill="#4fae7c"/><circle cx="65" cy="33" r="11" fill="#3f9f6c"/><circle cx="84" cy="34" r="6" fill="#97dcae"/><circle cx="103" cy="43" r="14" fill="#f3b477"/><circle cx="74" cy="53" r="12" fill="#f3b477"/><circle cx="93" cy="64" r="8" fill="#dd8528"/><circle cx="73" cy="76" r="9" fill="#4fae7c"/></svg>
    </div>
    <div class="sm-text">
      <p>For <strong>symbol maps</strong> try</p>
      <p>1 geo <svg><use href="#globe"/></svg><span class="pill p70">Dimension</span></p>
      <p>0 or more<span class="pill p75">Dimensions</span></p>
      <p>0 to 2<span class="pill grn p65">Measures</span></p>
      <p class="hint">May use spatial measure in<br>place of geo dimension</p>
    </div>
  </div>
</aside>
</body>
</html>
```
FILE: styles.css
```css
* { box-sizing: border-box; }
body { margin: 0; width: 1280px; height: 720px; overflow: hidden; position: relative; display: flex; flex-direction: column; background: #f5f5f2; font-family: Roboto, "Liberation Sans", sans-serif; font-size: 11px; color: #4a4a4a; white-space: nowrap; }
svg { display: block; fill: none; stroke: none; flex: none; }
.defs { position: absolute; width: 0; height: 0; }
h2 { margin: 0; font: 600 11.3px/17px Inter, sans-serif; color: #111; letter-spacing: -.05px; }
ul { list-style: none; margin: 0; padding: 0; }
p { margin: 0; }
i, em { font-style: normal; }

.titlebar { height: 20px; background: #fffffb; display: flex; align-items: center; padding-left: 2px; flex: none; }
.app-icon { width: 13px; height: 13px; }
.title { font: 9.5px/14px "Open Sans", sans-serif; color: #222; margin-left: 3px; flex: 1; }
.winbtns { display: flex; gap: 29px; padding-right: 16px; }
.winbtns svg { width: 10px; height: 10px; stroke: #333; stroke-width: .9; }

.menu { height: 16px; flex: none; background: #fffffb; padding-left: 5px; display: grid; grid-template-columns: 26px 31px 58px 59px 33px 46px 31px 42px 38px 47px 40px; font: 9.5px/16px "Open Sans", sans-serif; color: #222; }
.menu u { text-underline-offset: 1.5px; text-decoration-thickness: .7px; }

.toolbar { height: 34px; flex: none; background: #f4f4f2; display: flex; align-items: center; }
.toolbar i { display: flex; justify-content: center; align-items: center; height: 25px; flex: none; }
.toolbar i > svg { width: 16px; height: 16px; stroke: #666; stroke-width: .9; }
.toolbar .dim { stroke: #b9b9b9; }
.toolbar .mid { stroke: #8f8f8f; }
.toolbar i > .caret, .caret { width: 6px; height: 6px; fill: #444; stroke: none; }
.toolbar i > .light { fill: #aaa; }
.caret.mid-caret { fill: #888; }
.w8 { width: 8px; } .w20 { width: 20px; } .w22 { width: 22px; } .w24 { width: 24px; } .w25 { width: 25px; } .w26 { width: 26px; } .w28 { width: 28px; } .w37 { width: 37px; }
.w25 { margin-left: 1px; }
.pressed { background: #e4e4e1; }
.sep { width: 1px; height: 23px; background: #d6d6d4; flex: none; }
.sep-l5 { margin-left: 5px; } .sep-l6 { margin-left: 6px; } .sep-l8 { margin-left: 8px; } .sep-l11 { margin-left: 11px; }
.sep-r3 { margin-right: 3px; } .sep-r4 { margin-right: 4px; } .sep-r5 { margin-right: 5px; } .sep-r7 { margin-right: 7px; }
.fit { margin-left: 9px; width: 85px; height: 19px; border: 1px solid #c9c9c7; display: flex; background: #f9f9f7; font-size: 12px; line-height: 18px; color: #555; }
.fit span { flex: 1; padding-left: 5px; letter-spacing: .05px; }
.fit em { width: 15px; border-left: 1px solid #dcdcda; display: flex; align-items: center; justify-content: center; }

.workspace { height: 574px; flex: none; display: flex; }
.data-pane { width: 212px; border-right: 1px solid #d3d3d1; border-top: 1px solid #d9d9d7; background: #fffffb; display: flex; flex-direction: column; }
.pane-tabs { height: 21px; display: flex; font-size: 12px; line-height: 20px; }
.pane-tabs .on { width: 80px; padding-left: 15px; font: 600 11.5px/20px Inter, sans-serif; color: #111; }
.pane-tabs .off { flex: 1; background: #f7f7f4; border-left: 1px solid #cfcfcd; border-bottom: 1px solid #cfcfcd; padding: 0 4px 0 10px; display: flex; justify-content: space-between; align-items: center; }
.pane-tabs svg { width: 6px; height: 8px; fill: #555; }
.source { height: 25px; display: flex; align-items: center; padding: 0 0 0 16px; border-bottom: 1px solid #e2e2df; color: #666; font-size: 10.5px; }
.source svg { width: 12px; height: 12px; stroke: #777; stroke-width: .8; margin-right: 3px; }
.head { height: 21px; display: flex; align-items: center; padding-left: 15px; }
.head h2 { flex: 1; }
.grid-ic { width: 10px; height: 8px; stroke: #777; stroke-width: 1.3; margin-right: 3px; }
.find-ic { width: 8px; height: 8px; stroke: #555; stroke-width: .8; margin-right: 4px; }
.head em { width: 15px; height: 15px; border-left: 1px solid #ccc; display: flex; align-items: center; justify-content: center; }
.dims { height: 323px; border-bottom: 1px solid #e2e2df; }
.scroller { display: flex; height: 301px; }
.fields li { height: 17.34px; display: flex; align-items: center; padding-left: 15px; font-size: 10.5px; line-height: 17px; }
.dim-list { flex: 1; padding-top: .8px; }
.fields svg { width: 12px; height: 12px; stroke: #4d8fa0; stroke-width: .85; margin-right: 6.5px; }
.green svg { stroke: #3f9f80; }
.fields abbr { width: 18.5px; font: 600 6.5px/17px "Liberation Sans", sans-serif; color: #4d8fa0; letter-spacing: 0; }
.fields .gen { font-style: italic; letter-spacing: .1px; }
.gen abbr { font-style: normal; }
.scrollbar { width: 13px; background: #f1f1ef; display: flex; flex-direction: column; }
.scrollbar svg { width: 13px; height: 29px; stroke: #444; stroke-width: 1.2; }
.scrollbar .down { height: 14px; }
.thumb { flex: 1; background: #cbcbc9; }
.meas { height: 166px; border-bottom: 1px solid #e2e2df; padding-top: 2px; }
.meas h2, .params h2 { padding-left: 15px; }
.meas ul { padding-top: 3.4px; }
.params { padding-top: 1px; }
.params ul { padding-top: 3px; }

.cards { width: 137px; padding: 1px 3px 0 4px; border-right: 1px solid #dededc; display: flex; flex-direction: column; }
.card { border: 1px solid #d3d3d1; background: #fafaf7; padding: 2px 0 0 5px; font-size: 10.3px; line-height: 18px; color: #666; width: 129px; }
.pages { height: 46px; margin-bottom: 4px; }
.filters { height: 61px; margin-bottom: 4px; padding-top: 3px; }
.marks { height: 201px; padding: 0 0 0 4px; border-color: #bbb; position: relative; }
.marks-head { display: flex; justify-content: space-between; align-items: center; height: 24px; padding-right: 4px; }
.mark-type { margin-top: 4px; width: 119px; height: 16px; border: 1px solid #ccc; background: #fdfdfa; display: flex; align-items: center; padding-left: 8px; font-size: 9.3px; line-height: 14px; }
.mark-type svg:first-child { width: 8px; height: 8px; stroke: #777; margin-right: 4px; }
.mark-type span { flex: 1; }
.mark-type em { width: 15px; height: 14px; border-left: 1px solid #e6e6e4; display: flex; align-items: center; justify-content: center; }
.mark-type em svg { width: 6px !important; height: 6px !important; stroke: none !important; margin: 0 !important; }
.mark-btns { margin-top: 4px; display: grid; grid-template-columns: 36px 37px 36px; gap: 4px 5px; }
.mb { height: 35px; border: 1px solid #dcdcda; background: #fbfbf8; display: flex; flex-direction: column; align-items: center; font-size: 9.4px; line-height: 12px; letter-spacing: 0; color: #555; }
.mb svg { width: 12px; height: 12px; margin: 5px 0 4px; stroke: #666; stroke-width: .9; }
.mb.active { border-color: #888; background: #fff; }
.mb.active svg, .pills svg:first-child { stroke: none; }
.pills { margin-top: 7px; display: grid; grid-template-columns: 14px 95px; column-gap: 3px; row-gap: 2px; padding-left: 4px; align-items: center; }
.pills svg { width: 9px; height: 9px; stroke: #777; margin-left: 3px; }
.pill { display: inline-block; height: 16px; border-radius: 8px; background: #4c99ae; color: #fff; font-size: 10.5px; line-height: 16.5px; padding-left: 9px; letter-spacing: .15px; font-weight: 400; }
.pill.grn { background: #12c47f; }
.cursor { position: absolute; left: 30px; top: 73px; width: 13px; height: 20px; }

.sheet-area { width: 794px; padding-top: 1px; display: flex; flex-direction: column; }
.shelf { height: 21px; border: 1px solid #d3d3d1; background: #fafaf7; margin-bottom: 4px; }
.shelf span { width: 106px; height: 19px; border-right: 1px solid #d3d3d1; display: flex; align-items: center; padding-left: 5px; font-size: 10.3px; color: #5c5c5c; letter-spacing: .1px; }
.shelf svg { width: 9px; height: 8px; stroke: #555; stroke-width: .9; margin-right: 4px; }
.sheet { height: 520px; border: 1px solid #d3d3d1; background: #fffffc; }
.viz { width: 792px; height: 518px; }
.viz text { font-family: "Noto Sans", sans-serif; font-size: 10px; }
.viz .sheet-title { font-size: 16.5px; font-weight: 300; fill: #555; }
.lbl-dark { fill: #2b2b2b; }
.lbl-light { fill: #efe9e6; }

.sheet-tabs { height: 25px; flex: none; background: #e6e6e3; border-top: 1px solid #d8d8d5; display: flex; line-height: 25px; }
.ds { width: 109px; border-right: 1px solid #cdcdca; display: flex; align-items: center; padding-left: 6px; color: #666; font-size: 10.5px; }
.ds svg { width: 8px; height: 10px; stroke: #666; stroke-width: .8; margin-right: 3px; }
.cur { width: 46px; background: #fffffb; text-align: center; font-weight: 500; color: #333; font-size: 10.4px; padding-right: 1px; }
.new { width: 21.4px; border-right: 1px solid #cdcdca; display: flex; align-items: center; justify-content: center; }
.new svg { width: 12px; height: 12px; stroke: #666; stroke-width: .8; }
.new .plus { stroke: #444; stroke-width: 1.1; }

.status { height: 18px; flex: none; background: #ecece9; border-top: 1px solid #d8d8d5; display: flex; font-size: 9.1px; line-height: 17px; color: #333; padding-left: 2px; }
.s1 { width: 51px; } .s2 { width: 83px; letter-spacing: -.05px; word-spacing: -.8px; } .s3 { width: 865px; letter-spacing: .05px; }
.cells { display: flex; flex: none; }
.cells b { border-left: 1px solid #cacac7; height: 17px; display: flex; align-items: center; }
.c104 { width: 104px; } .c22 { width: 22px; } .c21 { width: 21px; } .c38 { width: 38px; } .c47 { width: 47px; }
.cells svg { width: 46px; height: 8px; fill: #a9a9a7; }
.cells .ln { stroke: #a9a9a7; stroke-width: .9; }
.cells .dk { fill: #555; }

.taskbar { height: 33px; flex: none; background: linear-gradient(90deg, #1c2434, #232e3e 35%, #1d2b38 75%, #17202b); display: flex; }
.taskbar > i { width: 41.2px; flex: none; display: flex; align-items: center; justify-content: center; position: relative; padding-bottom: 1px; }
.taskbar > .tb40 { width: 40px; } .taskbar > .tb42 { width: 41px; padding-right: 1px; }
.taskbar i svg { width: 16px; height: 16px; }
.taskbar i .i19 { width: 19px; height: 19px; } .taskbar i .i20 { width: 20px; height: 20px; }
.taskbar text { font: bold 8.5px "Liberation Sans", sans-serif; fill: #fff; }
.taskbar .sel { background: #4a515e; margin-left: 1px; }
.open::after { content: ""; position: absolute; left: 4px; right: 4px; bottom: 0; height: 2px; background: #dba184; }
.sel.open::after { left: 0; right: 0; }
.tray { margin-left: auto; display: flex; align-items: center; font: 10.3px/16px "Open Sans", sans-serif; color: #f2f2f2; border-right: 1px solid #58606a; margin-right: 3px; padding-right: 15px; }
.tray svg { width: 16px; height: 16px; margin-right: 4.2px; }
.tray .wl { stroke: #e8e8e8; stroke-width: 1; }
.lang { margin-left: 2px; width: 31px; }
.clock { width: 50px; display: flex; flex-direction: column; align-items: center; font-size: 10px; line-height: 15px; letter-spacing: -.1px; }
.tray .note { margin: 0 0 0 15px; }

.showme { position: absolute; left: 1107px; top: 40px; width: 170px; height: 484px; filter: drop-shadow(1px 1px 1px rgba(0,0,0,.35)); display: flex; flex-direction: column; }
.sm-tab { align-self: flex-end; width: 86px; height: 31px; background: #fafaf7; border: 1px solid #e2e2e0; border-bottom: 0; display: flex; align-items: center; font: 11px/26px Inter, sans-serif; color: #444; padding: 0 0 5px 8px; }
.sm-tab svg { width: 10px; height: 10px; stroke-width: 1.8; margin-right: 3px; }
.sm-body { flex: 1; background: #fafaf7; border: 1px solid #dcdcda; border-right: 0; border-top: 0; padding: 11px 0 0 11px; }
.thumbs { display: grid; grid-template-columns: repeat(3, 46px); grid-auto-rows: 35px; gap: 3px 4px; }
.thumbs svg { width: 46px; height: 35px; background: #fffffc; outline: 1px solid #e2e2e0; outline-offset: -1px; }
.thumbs .picked { outline-color: #c4552e; }
.thumbs .rings { stroke-width: 3; }
.thumbs .lines { stroke-width: 2.5; }
.sm-text { padding: 11px 0 0 1px; font-size: 10.4px; color: #333; }
.sm-text p { height: 22.4px; display: flex; align-items: center; }
.sm-text p:first-child { height: 20px; }
.sm-text strong { margin: 0 3px; color: #111; font: 600 9.9px Inter, sans-serif; }
.sm-text svg { width: 12px; height: 12px; stroke: #555; stroke-width: .8; margin: 0 0 0 2px; }
.sm-text .pill { margin-left: 2px; text-align: center; padding: 0; }
.p70 { width: 71px; } .p75 { width: 76px; } .p65 { width: 66px; }
.sm-text .hint { display: block; height: auto; line-height: 13px; color: #8a8a8a; padding-top: 5px; font-size: 10.25px; }
```
